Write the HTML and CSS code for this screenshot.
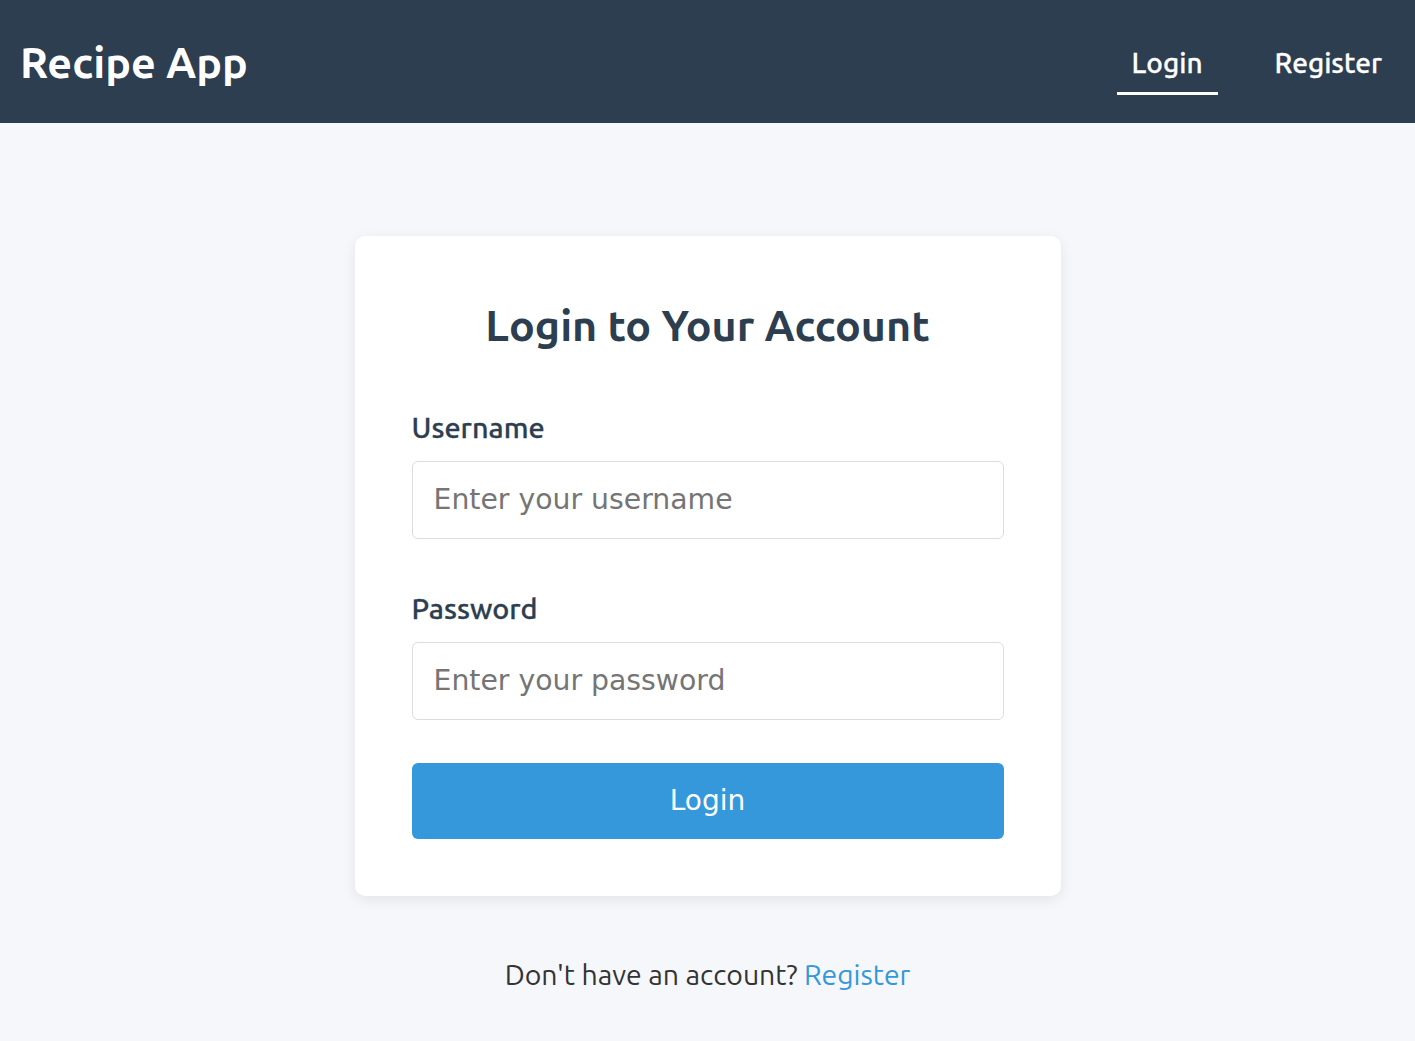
FILE: index.html
```html
<!DOCTYPE html>
<html lang="en">
<head>
<meta charset="utf-8">
<title>Recipe App</title>
<link rel="stylesheet" href="styles.css">
</head>
<body>
<header class="topbar">
  <div class="brand">Recipe App</div>
  <nav class="nav">
    <a class="nav-link active" href="#">Login</a>
    <a class="nav-link" href="#">Register</a>
  </nav>
</header>
<main class="main">
  <section class="card">
    <h1 class="card-title">Login to Your Account</h1>
    <form class="form">
      <div class="field">
        <label class="label" for="u">Username</label>
        <input class="input" id="u" type="text" placeholder="Enter your username">
      </div>
      <div class="field">
        <label class="label" for="p">Password</label>
        <input class="input" id="p" type="password" placeholder="Enter your password">
      </div>
      <button class="btn" type="button">Login</button>
    </form>
  </section>
  <p class="alt">Don't have an account? <a class="alt-link" href="#">Register</a></p>
</main>
</body>
</html>
```

FILE: styles.css
```css
* { box-sizing: border-box; }
html, body { margin: 0; padding: 0; }
body {
  font-family: Ubuntu, "Open Sans", "DejaVu Sans", sans-serif;
  background: #f5f7fa;
  color: #333;
}
.topbar {
  height: 123px;
  background: #2c3e50;
  display: flex;
  align-items: center;
  justify-content: space-between;
  padding: 0 18px 0 20px;
}
.brand {
  color: #fff;
  font-weight: 700;
  font-size: 43px;
}
.nav {
  display: flex;
  gap: 42px;
  align-items: center;
}
.nav-link {
  color: #fff;
  text-decoration: none;
  font-size: 28px;
  font-weight: 500;
  -webkit-text-stroke: 0.3px #fff;
  padding: 14px 15px;
  border-bottom: 3px solid transparent;
  margin-top: 5px;
}
.nav-link.active { border-bottom-color: #fff; }
.main {
  display: flex;
  flex-direction: column;
  align-items: center;
  padding-top: 113px;
}
.card {
  width: 706px;
  background: #fff;
  border-radius: 10px;
  box-shadow: 0 4px 14px rgba(0,0,0,0.08);
  padding: 62px 57px 57px;
}
.card-title {
  margin: 0 0 57px;
  text-align: center;
  color: #2c3e50;
  font-size: 43px;
  font-weight: 700;
  line-height: 1.3;
}
.form { display: flex; flex-direction: column; }
.field { display: flex; flex-direction: column; margin-bottom: 53px; }
.field:last-of-type { margin-bottom: 43px; }
.label {
  color: #2c3e50;
  font-weight: 500;
  font-size: 28.8px;
  -webkit-text-stroke: 0.3px #2c3e50;
  margin-bottom: 18px;
}
.input {
  height: 78px;
  border: 1px solid #ddd;
  border-radius: 6px;
  padding: 0 21px;
  font-family: "DejaVu Sans", sans-serif;
  font-size: 28.3px;
  color: #333;
}
.input::placeholder { color: #757575; }
.btn {
  height: 76px;
  border: 0;
  border-radius: 6px;
  background: #3498db;
  color: #fff;
  font-family: "DejaVu Sans", sans-serif;
  font-size: 28px;
}
.alt {
  margin: 63px 0 0;
  font-size: 28.4px;
  color: #333;
}
.alt-link { color: #3498db; text-decoration: none; }
```
